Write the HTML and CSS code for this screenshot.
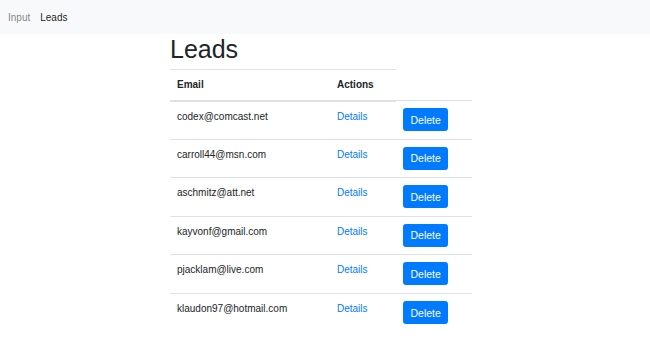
FILE: index.html
```html
<!DOCTYPE html>
<html lang="en">
<head>
    <meta charset="UTF-8">
    <meta name="viewport" content="width=device-width, initial-scale=1.0">
    <title>Leads</title>
    <link rel="stylesheet" href="styles.css">
</head>
<body>
    <nav class="navbar">
        <a class="nav-link" href="#">Input</a>
        <a class="nav-link active" href="#">Leads</a>
    </nav>
    <main class="content">
        <h1>Leads</h1>
        <table class="table">
            <thead>
                <tr>
                    <th class="col-email">Email</th>
                    <th class="col-details">Actions</th>
                </tr>
            </thead>
            <tbody>
                <tr>
                    <td>codex@comcast.net</td>
                    <td><a href="#">Details</a></td>
                    <td><button class="btn">Delete</button></td>
                </tr>
                <tr>
                    <td>carroll44@msn.com</td>
                    <td><a href="#">Details</a></td>
                    <td><button class="btn">Delete</button></td>
                </tr>
                <tr>
                    <td>aschmitz@att.net</td>
                    <td><a href="#">Details</a></td>
                    <td><button class="btn">Delete</button></td>
                </tr>
                <tr>
                    <td>kayvonf@gmail.com</td>
                    <td><a href="#">Details</a></td>
                    <td><button class="btn">Delete</button></td>
                </tr>
                <tr>
                    <td>pjacklam@live.com</td>
                    <td><a href="#">Details</a></td>
                    <td><button class="btn">Delete</button></td>
                </tr>
                <tr>
                    <td>klaudon97@hotmail.com</td>
                    <td><a href="#">Details</a></td>
                    <td><button class="btn">Delete</button></td>
                </tr>
            </tbody>
        </table>
    </main>
</body>
</html>
```

FILE: styles.css
```css
body {
    margin: 0;
    font-family: "Liberation Sans", Arial, sans-serif;
    font-size: 10px;
    line-height: 15px;
    color: #212529;
    background-color: #fff;
}
.navbar {
    display: flex;
    background-color: #f8f9fa;
    padding: 5px 3px;
}
.nav-link {
    padding: 4.5px 5px;
    color: rgba(0, 0, 0, 0.5);
    text-decoration: none;
}
.nav-link.active {
    color: rgba(0, 0, 0, 0.9);
}
.content {
    padding-left: 170px;
}
h1 {
    margin: 0 0 5px;
    font-size: 25px;
    font-weight: 400;
    line-height: 30px;
}
.table {
    border-collapse: collapse;
    width: 302px;
}
.table th,
.table td {
    padding: 7px 7px 7.6px;
    border-top: 1px solid #dee2e6;
    text-align: left;
    vertical-align: top;
}
.table thead th {
    border-bottom: 2px solid #dee2e6;
    font-weight: 700;
}
.col-email {
    width: 146px;
}
.col-details {
    width: 52px;
}
.table a {
    color: #007bff;
    text-decoration: none;
}
.btn {
    display: inline-block;
    vertical-align: top;
    font-family: inherit;
    font-size: 10.5px;
    line-height: 14px;
    padding: 3.5px 6.5px;
    color: #fff;
    background-color: #007bff;
    border: 1px solid #007bff;
    border-radius: 2.5px;
    cursor: pointer;
}
```
